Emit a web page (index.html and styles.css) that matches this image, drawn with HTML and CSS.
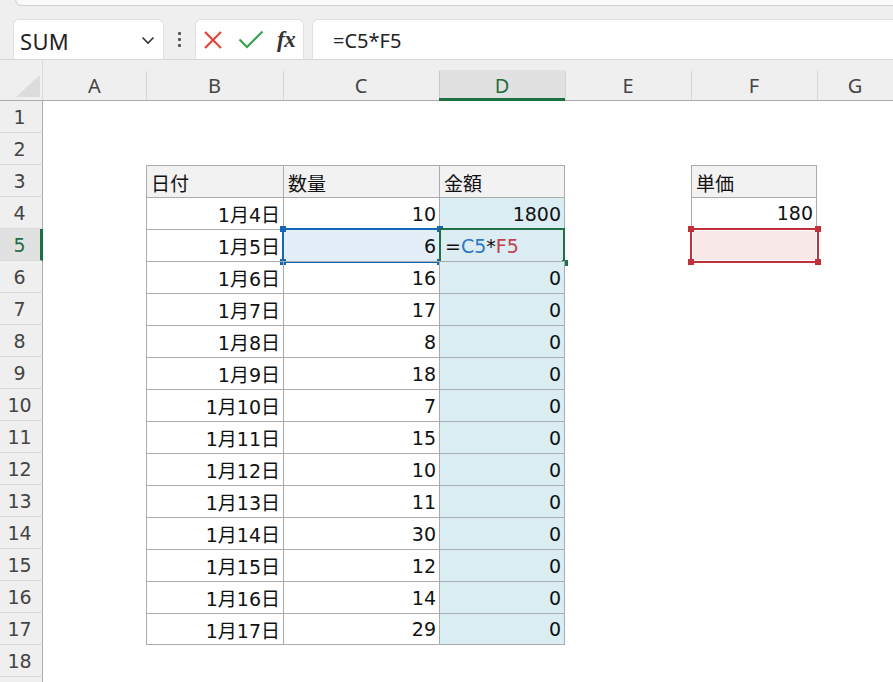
FILE: index.html
```html
<!DOCTYPE html>
<html lang="ja">
<head>
<meta charset="utf-8">
<title>Sheet</title>
<link rel="stylesheet" href="styles.css">
</head>
<body>
<div class="app">
  <div class="topstrip"><div class="search"></div></div>
  <div class="fbar">
    <div class="namebox">
      <span class="nametext">SUM</span>
      <svg class="chev" width="14" height="10" viewBox="0 0 14 10"><polyline points="1.5,2.5 7,8 12.5,2.5" fill="none" stroke="#333" stroke-width="1.6"/></svg>
    </div>
    <div class="dots"><i></i><i></i><i></i></div>
    <div class="fnbox">
      <svg width="20" height="20" viewBox="0 0 20 20"><path d="M2 2 L18 18 M18 2 L2 18" stroke="#e5433f" stroke-width="2.2" fill="none"/></svg>
      <svg width="26" height="20" viewBox="0 0 26 20"><polyline points="1.5,9.5 9,17 24.5,1.5" fill="none" stroke="#35a04c" stroke-width="2.2"/></svg>
      <span class="fx">fx</span>
    </div>
    <div class="formula">=C5*F5</div>
  </div>
  <div class="sheet">
    <div class="corner"><span class="tri"></span></div>
    <div class="ch first">A</div><div class="ch">B</div><div class="ch">C</div><div class="ch chsel">D</div><div class="ch">E</div><div class="ch">F</div><div class="ch">G</div>

    <div class="rh">1</div><div></div><div></div><div></div><div></div><div></div><div></div><div></div>
    <div class="rh">2</div><div></div><div></div><div></div><div></div><div></div><div></div><div></div>

    <div class="rh">3</div><div></div><div class="t hd">日付</div><div class="t hd">数量</div><div class="t tr hd">金額</div><div></div><div class="t tr hd">単価</div><div></div>
    <div class="rh">4</div><div></div><div class="t n">1月4日</div><div class="t n">10</div><div class="t tr n blue">1800</div><div></div><div class="t tr tb n">180</div><div></div>
    <div class="rh rhsel">5</div><div></div><div class="t n">1月5日</div><div class="t n csel">6<span class="selbox"><b class="h tlh"></b><b class="h trh"></b><b class="h blh"></b><b class="h brh"></b></span></div><div class="t tr blue act"><span class="eq">=</span><span class="rb">C5</span>*<span class="rr">F5</span><span class="actbox"><b class="h brh"></b></span></div><div></div><div class="fsel"><span class="redbox"><b class="h tlh"></b><b class="h trh"></b><b class="h blh"></b><b class="h brh"></b></span></div><div></div>
    <div class="rh">6</div><div></div><div class="t n">1月6日</div><div class="t n">16</div><div class="t tr n blue">0</div><div></div><div></div><div></div>
    <div class="rh">7</div><div></div><div class="t n">1月7日</div><div class="t n">17</div><div class="t tr n blue">0</div><div></div><div></div><div></div>
    <div class="rh">8</div><div></div><div class="t n">1月8日</div><div class="t n">8</div><div class="t tr n blue">0</div><div></div><div></div><div></div>
    <div class="rh">9</div><div></div><div class="t n">1月9日</div><div class="t n">18</div><div class="t tr n blue">0</div><div></div><div></div><div></div>
    <div class="rh">10</div><div></div><div class="t n">1月10日</div><div class="t n">7</div><div class="t tr n blue">0</div><div></div><div></div><div></div>
    <div class="rh">11</div><div></div><div class="t n">1月11日</div><div class="t n">15</div><div class="t tr n blue">0</div><div></div><div></div><div></div>
    <div class="rh">12</div><div></div><div class="t n">1月12日</div><div class="t n">10</div><div class="t tr n blue">0</div><div></div><div></div><div></div>
    <div class="rh">13</div><div></div><div class="t n">1月13日</div><div class="t n">11</div><div class="t tr n blue">0</div><div></div><div></div><div></div>
    <div class="rh">14</div><div></div><div class="t n">1月14日</div><div class="t n">30</div><div class="t tr n blue">0</div><div></div><div></div><div></div>
    <div class="rh">15</div><div></div><div class="t n">1月15日</div><div class="t n">12</div><div class="t tr n blue">0</div><div></div><div></div><div></div>
    <div class="rh">16</div><div></div><div class="t n">1月16日</div><div class="t n">14</div><div class="t tr n blue">0</div><div></div><div></div><div></div>
    <div class="rh">17</div><div></div><div class="t tb n">1月17日</div><div class="t tb n">29</div><div class="t tr tb n blue">0</div><div></div><div></div><div></div>
    <div class="rh">18</div><div></div><div></div><div></div><div></div><div></div><div></div><div></div>
    <div class="rh"></div><div></div><div></div><div></div><div></div><div></div><div></div><div></div>
  </div>
</div>
</body>
</html>
```

FILE: styles.css
```css
* { box-sizing: border-box; }
html, body { margin: 0; padding: 0; background: #ffffff; overflow: hidden; }
.app { width: 893px; height: 682px; overflow: hidden; }

.topstrip { height: 20px; background: #efefef; padding-left: 15px; }
.search {
  height: 7px;
  margin-top: -1px;
  background: #fafafa;
  border: 1px solid #d0d0d0;
  border-top: none;
  border-right: none;
  border-bottom-left-radius: 9px;
}

.fbar {
  height: 41px;
  background: #efefef;
  display: flex;
  align-items: stretch;
  padding-left: 13px;
  border-bottom: 1px solid #d6d6d6;
}
.namebox {
  width: 151px;
  background: #fff;
  border: 1px solid #e0e0e0;
  border-bottom: none;
  border-radius: 6px 6px 0 0;
  display: flex;
  align-items: center;
  justify-content: space-between;
  padding: 0 8px 0 6px;
}
.nametext { font-family: "Noto Sans", sans-serif; font-size: 22px; color: #222; letter-spacing: 0.3px; padding-top: 2px; }
.chev { margin-top: 1px; }
.dots { width: 31px; display: flex; flex-direction: column; align-items: center; justify-content: center; gap: 3px; }
.dots i { display: block; width: 3px; height: 3px; background: #555; border-radius: 1px; }
.fnbox {
  width: 109px;
  background: #fff;
  border: 1px solid #e0e0e0;
  border-bottom: none;
  border-radius: 6px 6px 0 0;
  display: flex;
  align-items: center;
  padding: 0 0 0 7px;
  gap: 15px;
}
.fnbox svg { display: block; }
.fx { font-family: "Liberation Serif", "DejaVu Serif", serif; font-style: italic; font-weight: bold; font-size: 23px; color: #333; margin-left: -2px; letter-spacing: -0.5px; }
.formula {
  flex: 1;
  margin-left: 8px;
  background: #fff;
  border: 1px solid #e0e0e0;
  border-right: none;
  border-bottom: none;
  border-radius: 6px 0 0 0;
  font-family: "Noto Sans", sans-serif;
  font-size: 20px;
  color: #222;
  display: flex;
  align-items: center;
  padding-left: 20px;
  padding-top: 1px;
}

.sheet {
  display: grid;
  grid-template-columns: 43px 103px 137px 156px 126px 126px 126px 1fr;
  grid-template-rows: 41px repeat(19, 32px);
}
.corner {
  background: #efefef;
  border-right: 1px solid #d9d9d9;
  border-bottom: 1px solid #ababab;
  display: flex;
  align-items: flex-end;
  justify-content: flex-end;
  padding: 0 2px 3px 0;
}
.tri {
  display: block;
  width: 24px;
  height: 22px;
  background: #dcdcdc;
  clip-path: polygon(100% 0, 100% 100%, 0 100%);
}
.ch {
  background: linear-gradient(#d6d6d6, #d6d6d6) left 11px / 1px 100% no-repeat, #efefef;
  border-bottom: 1px solid #ababab;
  font-family: "Noto Sans", sans-serif;
  font-size: 20px;
  color: #444;
  display: flex;
  align-items: center;
  justify-content: center;
  padding-top: 10px;
}
.ch.first { background: #efefef; }
.ch.chsel {
  background: linear-gradient(#c8c8c8, #c8c8c8) left 11px / 1px 100% no-repeat, linear-gradient(#e1e1e1, #e1e1e1) 0 10px / 100% 100% no-repeat, #efefef;
  border-bottom: 3px solid #1e7145;
  color: #1e6e42;
  padding-top: 12px;
}
.rh {
  background: #efefef;
  border-right: 1px solid #ababab;
  border-bottom: 1px solid #dadada;
  font-family: "DejaVu Sans", sans-serif;
  font-size: 19px;
  color: #444;
  display: flex;
  align-items: center;
  justify-content: center;
  padding-right: 3px;
}
.rh.rhsel { background: #e1e1e1; border-right: 3px solid #1e7145; color: #1e6e42; padding-right: 1px; }

.t {
  font-family: "DejaVu Sans", "Noto Sans CJK JP", sans-serif;
  font-size: 19px;
  color: #111;
  display: flex;
  align-items: center;
  padding: 0 3px 0 4px;
  border-top: 1px solid #ababab;
  border-left: 1px solid #ababab;
  white-space: nowrap;
  position: relative;
}
.tr { border-right: 1px solid #ababab; }
.tb { border-bottom: 1px solid #ababab; }
.n { justify-content: flex-end; }
.hd { background: #f2f2f2; font-family: "Noto Sans CJK JP", sans-serif; padding-top: 1px; }
.blue { background: #daedf3; }
.csel { background: #e3eef8; }
.act { background: #dbecf2; padding-left: 5px; }
.rb { color: #2c77c4; }
.rr { color: #c2404f; }

.selbox, .actbox, .redbox {
  position: absolute;
  top: -2px;
  left: -2px;
  right: -2px;
  bottom: -2px;
  border: 2px solid #1366b8;
  pointer-events: none;
}
.actbox { left: -1px; border-color: #1e7145; right: -1px; }
.h { position: absolute; width: 6px; height: 6px; background: #1366b8; }
.tlh { top: -4px; left: -4px; }
.trh { top: -4px; right: -4px; }
.blh { bottom: -4px; left: -4px; }
.brh { bottom: -4px; right: -4px; }
.actbox .h { background: #1e7145; bottom: -5px; right: -5px; }

.fsel { position: relative; background: #f8e8e8; }
.redbox { border-color: #c1313c; top: -1px; left: -1px; right: -2px; bottom: -2px; box-shadow: inset 0 0 0 1px #fff; }
.redbox .h { background: #c1313c; }
```
